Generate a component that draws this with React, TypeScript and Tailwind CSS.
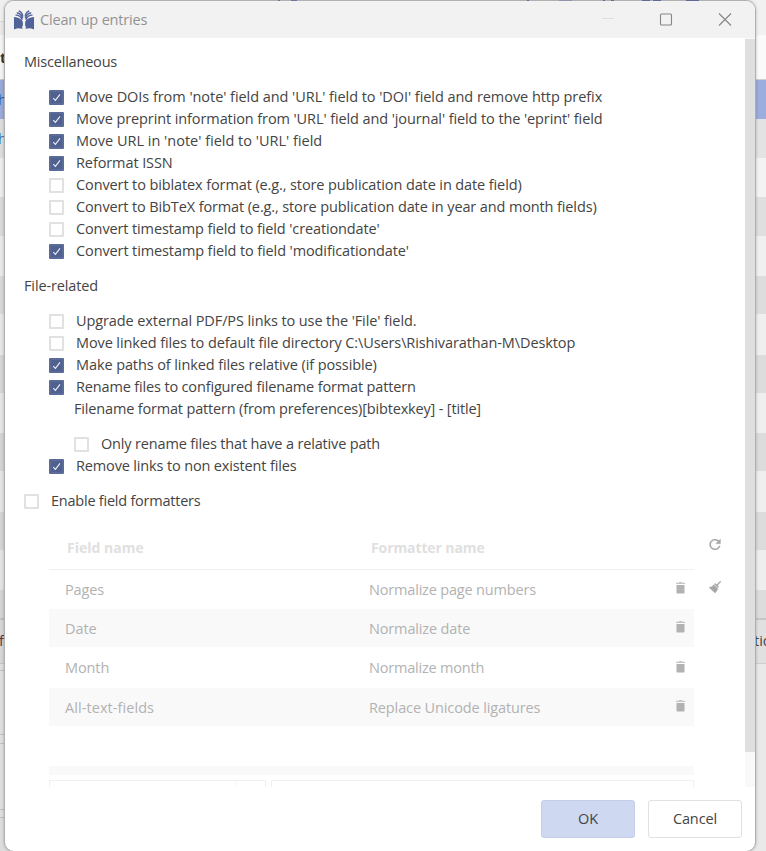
import React from "react";

type Band = { h: string; c: string };

const leftBands: Band[] = [
  { h: "h-[21px]", c: "bg-[#efefef]" },
  { h: "h-px", c: "bg-[#d6d6d6]" },
  { h: "h-[13px]", c: "bg-[#e9e9e9]" },
  { h: "h-[44px]", c: "bg-[#f3f3f3]" },
  { h: "h-px", c: "bg-[#c8c8c8]" },
  { h: "h-[39px]", c: "bg-[#98a9da]" },
  { h: "h-[39px]", c: "bg-[#dcdcdc]" },
  { h: "h-[39px]", c: "bg-[#ececec]" },
  { h: "h-[39px]", c: "bg-[#d9d9d9]" },
  { h: "h-[40px]", c: "bg-[#e8e8e8]" },
  { h: "h-[38px]", c: "bg-[#d7d7d7]" },
  { h: "h-[41px]", c: "bg-[#e6e6e6]" },
  { h: "h-[38px]", c: "bg-[#d5d5d5]" },
  { h: "h-[40px]", c: "bg-[#e5e5e5]" },
  { h: "h-[38px]", c: "bg-[#d4d4d4]" },
  { h: "h-[41px]", c: "bg-[#e4e4e4]" },
  { h: "h-[38px]", c: "bg-[#d3d3d3]" },
  { h: "h-[40px]", c: "bg-[#e3e3e3]" },
  { h: "h-[28px]", c: "bg-[#d3d3d3]" },
  { h: "h-[2px]", c: "bg-[#bebebe]" },
  { h: "h-[43px]", c: "bg-[#d6d6d6]" },
  { h: "h-px", c: "bg-[#c6c6c6]" },
  { h: "h-[6px]", c: "bg-[#dfdfdf]" },
  { h: "h-px", c: "bg-[#bebebe]" },
  { h: "h-[63px]", c: "bg-[#dfdfdf]" },
  { h: "h-px", c: "bg-[#bebebe]" },
  { h: "h-[8px]", c: "bg-[#dfdfdf]" },
  { h: "h-px", c: "bg-[#bebebe]" },
  { h: "h-[65px]", c: "bg-[#dfdfdf]" },
  { h: "h-px", c: "bg-[#bebebe]" },
  { h: "h-[7px]", c: "bg-[#dfdfdf]" },
  { h: "h-px", c: "bg-[#bebebe]" },
  { h: "h-[33px]", c: "bg-[#dddddd]" },
];

const rightBands: Band[] = [
  { h: "h-[35px]", c: "bg-[#f1f1f1]" },
  { h: "h-[44px]", c: "bg-[#fafafa]" },
  { h: "h-px", c: "bg-[#d0d0d0]" },
  { h: "h-[39px]", c: "bg-[#9dadde]" },
  { h: "h-[39px]", c: "bg-[#e3e3e3]" },
  { h: "h-[39px]", c: "bg-[#f3f3f3]" },
  { h: "h-[39px]", c: "bg-[#dfdfdf]" },
  { h: "h-[40px]", c: "bg-[#f0f0f0]" },
  { h: "h-[38px]", c: "bg-[#dddddd]" },
  { h: "h-[41px]", c: "bg-[#efefef]" },
  { h: "h-[38px]", c: "bg-[#dcdcdc]" },
  { h: "h-[40px]", c: "bg-[#efefef]" },
  { h: "h-[38px]", c: "bg-[#dcdcdc]" },
  { h: "h-[41px]", c: "bg-[#efefef]" },
  { h: "h-[38px]", c: "bg-[#dcdcdc]" },
  { h: "h-[40px]", c: "bg-[#eeeeee]" },
  { h: "h-[28px]", c: "bg-[#dcdcdc]" },
  { h: "h-[2px]", c: "bg-[#c6c6c6]" },
  { h: "h-[43px]", c: "bg-[#e0e0e0]" },
  { h: "h-px", c: "bg-[#cecece]" },
  { h: "h-[187px]", c: "bg-[#e9e9e9]" },
];

function Strip({ bands }: { bands: Band[] }) {
  return (
    <div className="flex w-[24px] flex-col">
      {bands.map((b, i) => (
        <div key={i} className={`shrink-0 ${b.h} ${b.c}`} />
      ))}
    </div>
  );
}

function Box({ on }: { on?: boolean }) {
  return on ? (
    <span className="grid size-[15px] shrink-0 place-items-center rounded-[1px] border-2 border-[#5a6a99] bg-[#50618f]">
      <svg width="9" height="9" viewBox="0 0 9 9" fill="none" stroke="#eef0f8" strokeWidth="1.1">
        <path d="M1.2 5.2 3.4 7.4 8 1.4" />
      </svg>
    </span>
  ) : (
    <span className="size-[15px] shrink-0 rounded-[1px] border-2 border-[#e1e1e1] bg-white" />
  );
}

function Check({ on, text, track }: { on?: boolean; text: string; track: string }) {
  return (
    <div className="flex h-[22px] items-center gap-3">
      <Box on={on} />
      <span className={track}>{text}</span>
    </div>
  );
}

function Trash() {
  return (
    <svg width="9" height="12" viewBox="0 0 9 12" fill="#b2b2b2" className="-mt-[3px]">
      <path d="M3 0h3v.7h3v1.2H0V.7h3z" opacity=".75" />
      <path d="M.5 3h8v7.4q0 1.200-1 1.200h-6q-1 0-1-1.200z" />
    </svg>
  );
}

const rows = [
  { field: "Pages", fmt: "Normalize page numbers", cls: "h-[39px]", ft: "tracking-[-0.15px]", mt: "tracking-[-0.18px]" },
  { field: "Date", fmt: "Normalize date", cls: "h-[38px] bg-[#f9f9f9] pt-px", ft: "tracking-[-0.1px]", mt: "tracking-[-0.15px]" },
  { field: "Month", fmt: "Normalize month", cls: "h-[41px] pt-px", ft: "tracking-[-0.1px]", mt: "tracking-[-0.2px]" },
  { field: "All-text-fields", fmt: "Replace Unicode ligatures", cls: "h-[38px] bg-[#f9f9f9] pt-px", ft: "tracking-[0.07px]", mt: "tracking-[-0.12px]" },
];

export default function App() {
  return (
    <div className="grid h-[851px] w-[766px] overflow-hidden font-['Open_Sans','Noto_Sans',sans-serif] text-[14.5px] leading-[22px] whitespace-nowrap text-[#444444]">
      <div className="col-start-1 row-start-1 flex justify-between overflow-hidden bg-[#b8b8b8]">
        <Strip bands={leftBands} />
        <Strip bands={rightBands} />
      </div>
      <div className="col-start-1 row-start-1 flex h-[851px] justify-between overflow-hidden">
        <div className="flex w-[6px] flex-col overflow-hidden">
          <span className="mt-[47px] font-bold text-[#333]">t</span>
          <span className="-ml-[2px] mt-[20px] text-[#3557a0]">h</span>
          <span className="-ml-[2px] mt-[17px] text-[#3b78b5]">h</span>
          <span className="-ml-px mt-[480px] tracking-[-0.8px] text-[#5a3040]">fi</span>
        </div>
        <div className="w-[12px] overflow-hidden pt-[630px]">tion</div>
      </div>

      <div className="col-start-1 row-start-1 ml-1 flex h-[852px] w-[752px] flex-col overflow-hidden rounded-[10px] border border-[#b0b0b0] bg-white shadow-[0_0_3px_rgba(0,0,0,0.25)]">
        <header className="flex h-[37px] shrink-0 items-center bg-[#f2f2f2] pl-[9px] text-[#929292]">
          <svg width="20" height="20" viewBox="0 0 20 20" fill="#50629a" className="mt-px">
            <path d="M0 7Q4.500 7 7.600 9.800q1.300 1.400 1.300 3v2.400q-1.300 1.500-.5 3.800Q4.500 17.200 0 19.500z" />
            <path d="M20 7Q15.500 7 12.400 9.800q-1.300 1.400-1.300 3v2.400q1.300 1.500.5 3.800 3.900-1.800 8.400.5z" />
            <g fill="none" stroke="#50629a" strokeWidth="1.300">
              <path d="M1.500 5.200Q6 4.800 8.200 9.800M2.800 3Q7 3 8.700 8.400M4.800 1Q8 1.800 8.900 6.500" />
              <path d="M18.500 5.200Q14 4.800 11.800 9.800M17.200 3Q13 3 11.300 8.400M15.200 1Q12 1.800 11.100 6.500" />
            </g>
          </svg>
          <span className="ml-1.5 tracking-[-0.17px]">Clean up entries</span>
          <span className="grow" />
          <svg width="136" height="20" viewBox="0 0 136 20" fill="none" stroke="#858585" strokeWidth="1.100" className="mr-[19px]">
            <path d="M2 8.500h12" stroke="#dedede" />
            <rect x="60.500" y="4" width="11" height="11" rx="1" />
            <path d="m119 3.500 12 12m0-12-12 12" />
          </svg>
        </header>

        <div className="flex h-[749px] shrink-0 justify-between">
          <main className="flex w-[740px] flex-col overflow-hidden pl-[19px] pt-[13px]">
            <div className="tracking-[-0.2px]">Miscellaneous</div>
            <div className="mt-[13px] pl-[25px]">
              <Check on text="Move DOIs from 'note' field and 'URL' field to 'DOI' field and remove http prefix" track="tracking-[-0.052px]" />
              <Check on text="Move preprint information from 'URL' field and 'journal' field to the 'eprint' field" track="tracking-[-0.1px]" />
              <Check on text="Move URL in 'note' field to 'URL' field" track="" />
              <Check on text="Reformat ISSN" track="tracking-[-0.1px]" />
              <Check text="Convert to biblatex format (e.g., store publication date in date field)" track="tracking-[-0.11px]" />
              <Check text="Convert to BibTeX format (e.g., store publication date in year and month fields)" track="tracking-[-0.122px]" />
              <Check text="Convert timestamp field to field 'creationdate'" track="tracking-[-0.12px]" />
              <Check on text="Convert timestamp field to field 'modificationdate'" track="tracking-[-0.11px]" />
            </div>
            <div className="mt-[13px] tracking-[-0.13px]">File-related</div>
            <div className="mt-[13px] pl-[25px]">
              <Check text="Upgrade external PDF/PS links to use the 'File' field." track="tracking-[-0.1px]" />
              <Check text="Move linked files to default file directory C:\Users\Rishivarathan-M\Desktop" track="tracking-[-0.11px]" />
              <Check on text="Make paths of linked files relative (if possible)" track="tracking-[-0.1px]" />
              <Check on text="Rename files to configured filename format pattern" track="tracking-[-0.155px]" />
              <div className="pl-[25px] tracking-[-0.17px]">Filename format pattern (from preferences)[bibtexkey] - [title]</div>
              <div className="mt-[13px] pl-[25px]">
                <Check text="Only rename files that have a relative path" track="tracking-[-0.16px]" />
              </div>
              <Check on text="Remove links to non existent files" track="tracking-[-0.15px]" />
            </div>
            <div className="mt-[13px]">
              <Check text="Enable field formatters" track="tracking-[-0.23px]" />
            </div>
            <div className="mt-[15px] flex pl-[25px] text-[#b2b2b2]">
              <div className="w-[645px]">
                <div className="flex h-[43px] items-center border-b border-[#f0f0f0] pl-[18px] text-[14px] font-bold text-[#e0e0e0]">
                  <span className="w-[304px]">Field name</span>
                  <span className="tracking-[-0.1px]">Formatter name</span>
                </div>
                {rows.map((r) => (
                  <div key={r.field} className={`flex items-center pl-4 pr-[9px] ${r.cls}`}>
                    <span className={`w-[304px] ${r.ft}`}>{r.field}</span>
                    <span className={`grow ${r.mt}`}>{r.fmt}</span>
                    <Trash />
                  </div>
                ))}
                <div className="mt-[40px] h-[9px] bg-[#f9f9f9]" />
                <div className="mt-[5px] flex gap-[5px]">
                  <div className="flex h-10 w-[217px] border border-[#f0f0f0]">
                    <div className="w-[186px] border-r border-[#f5f5f5]" />
                  </div>
                  <div className="h-10 grow border border-[#f0f0f0]" />
                </div>
              </div>
              <div className="flex flex-col gap-[31px] pl-[15px] pt-[12px]">
                <svg width="12" height="11" viewBox="3.500 4 17 16" fill="#a6a6a6" stroke="#a6a6a6" strokeWidth=".4">
                  <path d="M17.650 6.350A8 8 0 1 0 19.730 14h-2.080A6 6 0 1 1 12 6c1.660 0 3.140.69 4.220 1.780L13 11h7V4z" />
                </svg>
                <svg width="12" height="12" viewBox="0 0 12 12" fill="#a6a6a6" stroke="#a6a6a6" strokeWidth=".4">
                  <path d="m11.300 0 .7.700-3.400 3.500.7.800q.7.900-.2 1.700L5.300 3.100q.9-.9 1.700-.2l.9.700zM4.900 3.700l4 4Q8 10.200 6 12L0 6.500q2.900-.2 4.900-2.800" />
                </svg>
              </div>
            </div>
          </main>
          <div className="w-[10px] shrink-0 bg-[#f9f9f9] pt-px">
            <div className="h-[713px] bg-[#dfdfdf]" />
          </div>
        </div>

        <footer className="flex justify-end gap-[13px] pr-[13px] pt-[13px] tracking-[-0.1px]">
          <button className="h-[38px] w-[94px] rounded-[3px] border border-[#c3cee9] bg-[#ced8f1]">OK</button>
          <button className="h-[38px] w-[94px] rounded-[3px] border border-[#e1e1e1] bg-white">Cancel</button>
        </footer>
      </div>

      {/* Toolbar icons of the window behind, showing through the dialog's top edge */}
      <div className="col-start-1 row-start-1 flex h-px">
        <span className="ml-[278px] w-[2px] bg-[#6b74a0]" />
        <span className="ml-[11px] w-[6px] bg-[#6b74a0]" />
        <span className="ml-[230px] w-[2px] bg-[#5f6a96]" />
        <span className="ml-[30px] w-[13px] bg-[#9094ab]" />
        <span className="ml-[31px] w-[2px] bg-[#5f6a96]" />
        <span className="ml-[6px] w-[3px] bg-[#5f6a96]" />
        <span className="ml-[28px] w-[8px] bg-[#5f6a96]" />
        <span className="ml-[3px] w-[8px] bg-[#5f6a96]" />
        <span className="ml-[25px] w-[13px] bg-[#5f6a96]" />
      </div>
    </div>
  );
}
